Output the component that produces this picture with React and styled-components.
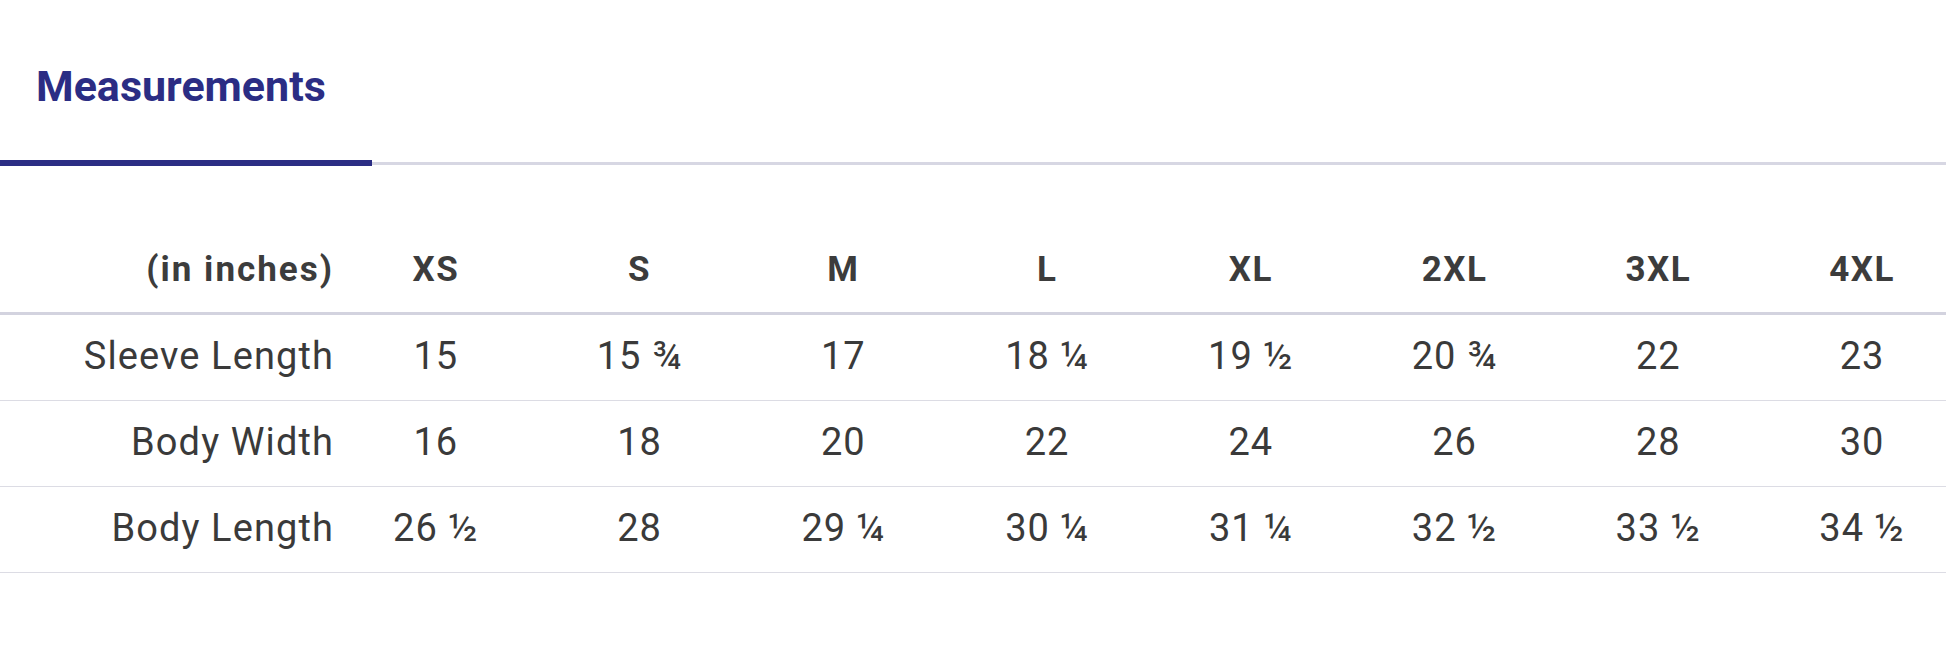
import React from "react";
import styled, { createGlobalStyle } from "styled-components";

const Global = createGlobalStyle`
  html, body {
    margin: 0;
    padding: 0;
    background: #ffffff;
    overflow: hidden;
  }
  body {
    font-family: Roboto, "Liberation Sans", Arial, sans-serif;
  }
`;

const Page = styled.div`
  width: 1946px;
  overflow: hidden;
`;

const TabBar = styled.div`
  display: flex;
  align-items: flex-end;
`;

const Tab = styled.div`
  width: 336px;
  padding: 61px 0 49px 36px;
  border-bottom: 6px solid #2b2d84;
  font-size: 43px;
  line-height: 50px;
  font-weight: 700;
  color: #2b2d84;
  white-space: nowrap;
`;

const TabRail = styled.div`
  flex: 1;
  margin-bottom: 1px;
  border-bottom: 3px solid #d7d7e3;
`;

const Table = styled.div`
  margin-top: 60px;
  width: 1964px;
`;

const Row = styled.div`
  display: grid;
  grid-template-columns: 334px repeat(8, 1fr);
  align-items: center;
  box-sizing: border-box;
  height: ${(p) => (p.$head ? "89px" : "86px")};
  padding-bottom: ${(p) => (p.$head ? "0" : "4px")};
  border-bottom: ${(p) => (p.$head ? "3px solid #d3d3df" : "1px solid #dcdce4")};
`;

const Label = styled.div`
  text-align: right;
  white-space: nowrap;
  font-size: ${(p) => (p.$head ? "35px" : "38px")};
  font-weight: ${(p) => (p.$head ? 700 : 400)};
  letter-spacing: ${(p) => (p.$head ? "2px" : "1.1px")};
  color: ${(p) => (p.$head ? "#3c3c3c" : "#3a3a3a")};
`;

const Cell = styled.div`
  text-align: center;
  white-space: nowrap;
  font-size: ${(p) => (p.$head ? "35px" : "38px")};
  font-weight: ${(p) => (p.$head ? 700 : 400)};
  letter-spacing: ${(p) => (p.$head ? "1.5px" : "1px")};
  color: ${(p) => (p.$head ? "#3c3c3c" : "#3a3a3a")};
`;

const sizes = ["XS", "S", "M", "L", "XL", "2XL", "3XL", "4XL"];

const rows = [
  { label: "Sleeve Length", values: ["15", "15 ¾", "17", "18 ¼", "19 ½", "20 ¾", "22", "23"] },
  { label: "Body Width", values: ["16", "18", "20", "22", "24", "26", "28", "30"] },
  { label: "Body Length", values: ["26 ½", "28", "29 ¼", "30 ¼", "31 ¼", "32 ½", "33 ½", "34 ½"] },
];

export default function App() {
  return (
    <Page>
      <Global />
      <TabBar>
        <Tab>Measurements</Tab>
        <TabRail />
      </TabBar>
      <Table>
        <Row $head>
          <Label $head>(in inches)</Label>
          {sizes.map((s) => (
            <Cell $head key={s}>{s}</Cell>
          ))}
        </Row>
        {rows.map((r) => (
          <Row key={r.label}>
            <Label>{r.label}</Label>
            {r.values.map((v, i) => (
              <Cell key={i}>{v}</Cell>
            ))}
          </Row>
        ))}
      </Table>
    </Page>
  );
}
